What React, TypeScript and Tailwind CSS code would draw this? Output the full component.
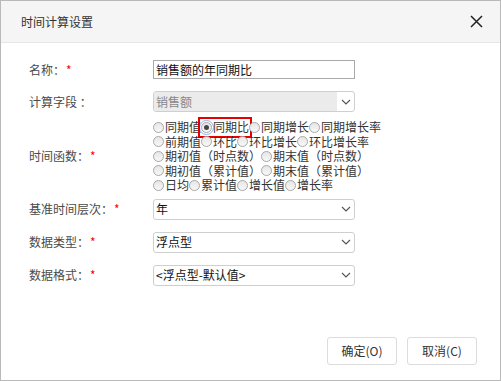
import React from "react";

const font = { fontFamily: '"Noto Sans CJK SC", "Microsoft YaHei", sans-serif' };

function Chevron() {
  return (
    <svg width="10" height="6" viewBox="0 0 10 6" className="text-[#555]">
      <path d="M1 1 L5 5 L9 1" fill="none" stroke="currentColor" strokeWidth="1.1" />
    </svg>
  );
}

function Label({ text, required = true }: { text: string; required?: boolean }) {
  return (
    <div className="w-[152px] shrink-0 pl-[28px] text-[12px] leading-[16px] text-[#4a4a4a]">
      {text}
      {required && <span className="ml-px text-[#f00]">*</span>}
    </div>
  );
}

function Select({ value, disabled = false }: { value: string; disabled?: boolean }) {
  return (
    <div className="flex h-[21px] w-[202px] items-center overflow-hidden rounded-[3px] border border-[#cfcfcf] bg-white">
      <div
        className={
          "flex h-full flex-1 items-center pl-[2px] text-[12px] " +
          (disabled ? "bg-[#ebebeb] text-[#888]" : "text-[#111]")
        }
      >
        {value}
      </div>
      <div className="flex h-full w-[17px] items-center justify-center">
        <Chevron />
      </div>
    </div>
  );
}

const radios: string[] = [
  "同期值",
  "同期比",
  "同期增长",
  "同期增长率",
  "前期值",
  "环比",
  "环比增长",
  "环比增长率",
  "期初值（时点数）",
  "期末值（时点数）",
  "期初值（累计值）",
  "期末值（累计值）",
  "日均",
  "累计值",
  "增长值",
  "增长率",
];

function Radio({ label, checked }: { label: string; checked: boolean }) {
  return (
    <span
      className={
        "flex items-center whitespace-nowrap " +
        (checked ? "outline-2 outline-offset-1 outline-[#e60000]" : "")
      }
    >
      <span
        className={
          "mr-px flex h-[11px] w-[11px] items-center justify-center rounded-full border border-[#a8a8a8] bg-gradient-to-b from-[#e6e6e6] to-[#f8f8f8] " +
          (checked ? "outline outline-offset-1 outline-[#8ab4ec]" : "")
        }
      >
        {checked && <span className="h-[5px] w-[5px] rounded-full bg-[#444]" />}
      </span>
      <span>{label}</span>
    </span>
  );
}

export default function App() {
  return (
    <div className="flex h-[381px] w-[501px] flex-col border border-[#b9b9b9] bg-white text-[#333]" style={font}>
      <div className="flex h-[42px] shrink-0 items-center justify-between border-b border-[#e6e6e6] bg-[#f5f5f5] pl-[20px] pr-[17px]">
        <span className="text-[12px] text-[#333]">时间计算设置</span>
        <svg width="13" height="13" viewBox="0 0 13 13" className="text-[#222]">
          <path d="M1 1 L12 12 M12 1 L1 12" stroke="currentColor" strokeWidth="1.5" />
        </svg>
      </div>

      <div className="flex flex-col pt-[17px]">
        <div className="flex items-center">
          <Label text="名称：" />
          <div className="flex h-[19px] w-[202px] items-center border border-[#a9a9a9] pl-[2px] text-[12px] text-[#111]">
            销售额的年同期比
          </div>
        </div>

        <div className="mt-[12px] flex items-center">
          <Label text="计算字段 ：" required={false} />
          <Select value="销售额" disabled />
        </div>

        <div className="mt-[8px] flex items-center">
          <Label text="时间函数：" />
          <div className="flex w-[236px] flex-wrap text-[12px] leading-[14.5px] text-[#333]">
            {radios.map((r, i) => (
              <Radio key={r} label={r} checked={i === 1} />
            ))}
          </div>
        </div>

        <div className="mt-[6px] flex items-center">
          <Label text="基准时间层次：" />
          <Select value="年" />
        </div>

        <div className="mt-[12px] flex items-center">
          <Label text="数据类型：" />
          <Select value="浮点型" />
        </div>

        <div className="mt-[12px] flex items-center">
          <Label text="数据格式：" />
          <Select value="<浮点型-默认值>" />
        </div>
      </div>

      <div className="mt-auto flex justify-end gap-[10px] pb-[15px] pr-[23px]">
        <button className="h-[28px] w-[70px] rounded-[3px] border border-[#dcdcdc] bg-white text-[12px] text-[#333]">
          确定(O)
        </button>
        <button className="h-[28px] w-[70px] rounded-[3px] border border-[#dcdcdc] bg-white text-[12px] text-[#333]">
          取消(C)
        </button>
      </div>
    </div>
  );
}
